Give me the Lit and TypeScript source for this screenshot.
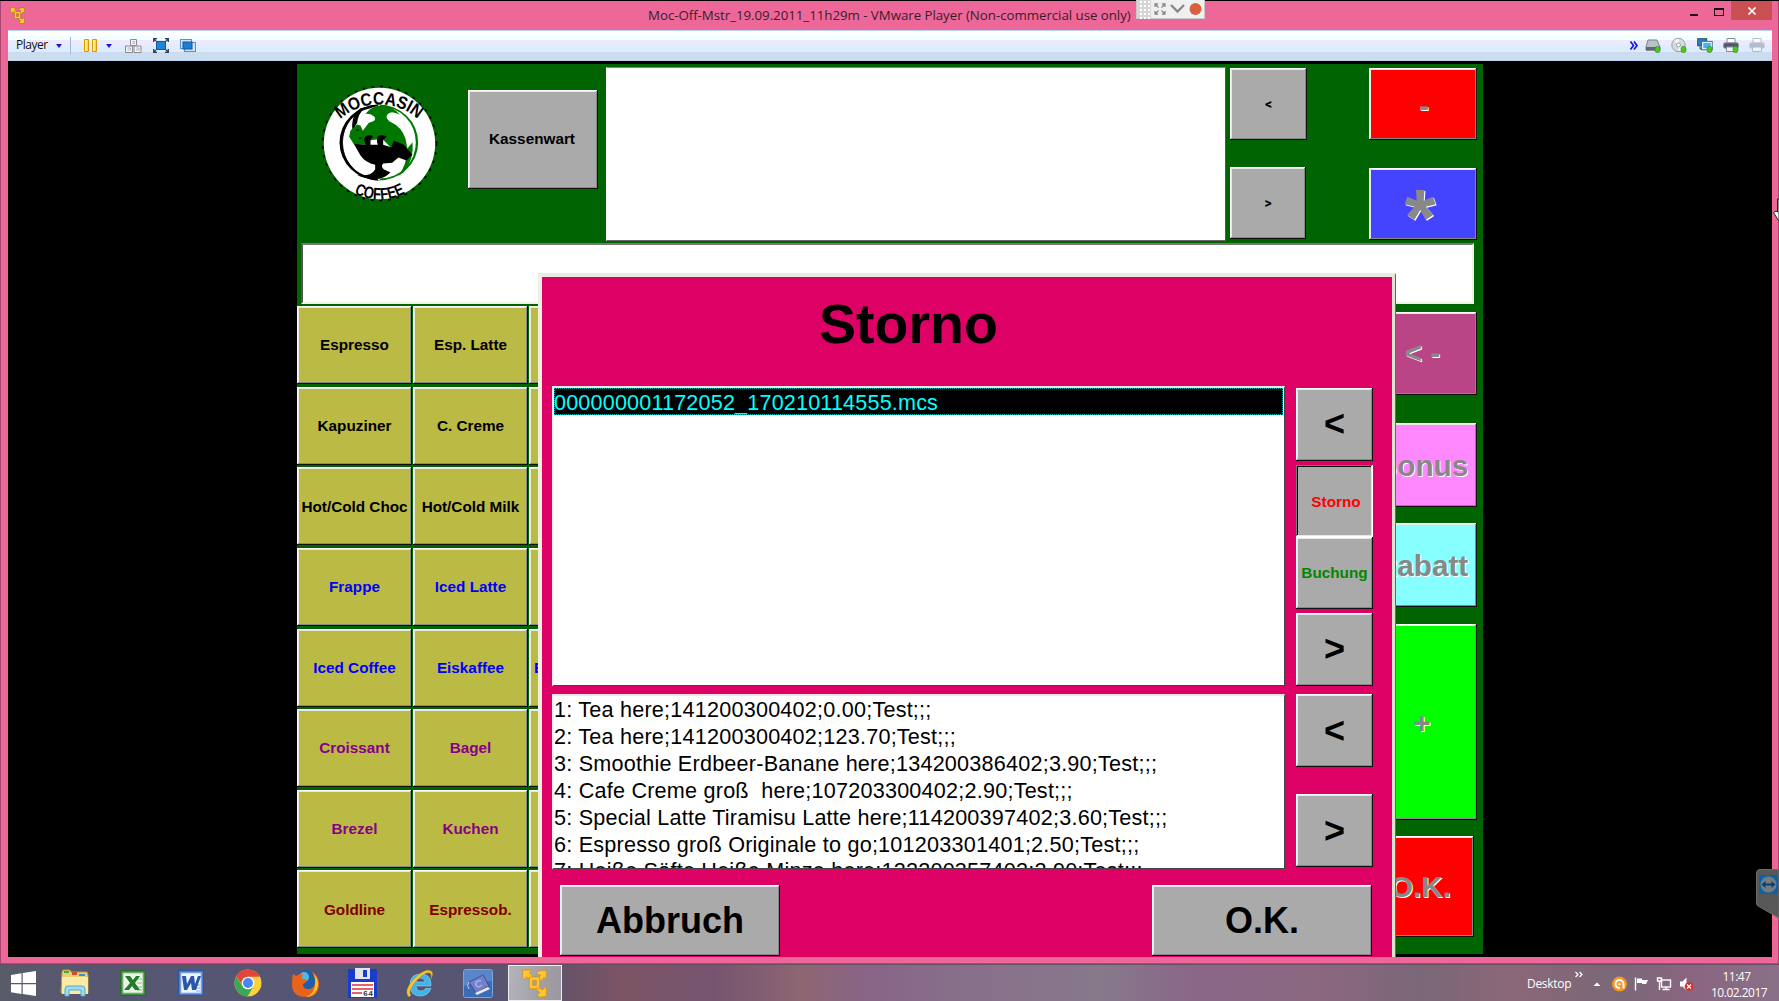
import { LitElement, html, css, svg } from "lit";
import { customElement } from "lit/decorators.js";

const products: { label: string; tone: string }[] = [
  { label: "Espresso", tone: "k" }, { label: "Esp. Latte", tone: "k" }, { label: "", tone: "k" },
  { label: "Kapuziner", tone: "k" }, { label: "C. Creme", tone: "k" }, { label: "", tone: "k" },
  { label: "Hot/Cold Choc", tone: "k" }, { label: "Hot/Cold Milk", tone: "k" }, { label: "", tone: "k" },
  { label: "Frappe", tone: "b" }, { label: "Iced Latte", tone: "b" }, { label: "", tone: "b" },
  { label: "Iced Coffee", tone: "b" }, { label: "Eiskaffee", tone: "b" }, { label: "E", tone: "b cut" },
  { label: "Croissant", tone: "p" }, { label: "Bagel", tone: "p" }, { label: "", tone: "p" },
  { label: "Brezel", tone: "p" }, { label: "Kuchen", tone: "p" }, { label: "", tone: "p" },
  { label: "Goldline", tone: "m" }, { label: "Espressob.", tone: "m" }, { label: "", tone: "m" },
];

const bookings = [
  "1: Tea here;141200300402;0.00;Test;;;",
  "2: Tea here;141200300402;123.70;Test;;;",
  "3: Smoothie Erdbeer-Banane here;134200386402;3.90;Test;;;",
  "4: Cafe Creme groß  here;107203300402;2.90;Test;;;",
  "5: Special Latte Tiramisu Latte here;114200397402;3.60;Test;;;",
  "6: Espresso groß Originale to go;101203301401;2.50;Test;;;",
  "7: Heiße Säfte Heiße Minze here;122200357402;2.90;Test;;;",
];

const vmGlyph = (fill: string, edge: string) => svg`
  <g fill=${fill} stroke=${edge} stroke-width="2">
    <path d="M1 3H28L21 11L31 22L22 32L12 23L8 33L1 27Z"/>
    <path d="M41 14L50 5H72V31L66 25L56 35L47 27L55 18Z"/>
    <path d="M40 60L48 51L60 63L72 52V82L52 85L44 79L53 71Z"/>
    <path fill-rule="evenodd" d="M21 24H52V59H21ZM31 34V49H42V34Z"/>
  </g>`;

const icons = {
  vmSmall: html`<svg width="15" height="17" viewBox="0 0 73 87">${vmGlyph("#ffd428", "#8a5410")}</svg>`,
  vmLarge: html`<svg width="25" height="29" viewBox="0 0 73 87">${vmGlyph("#ffc632", "#d08c0c")}</svg>`,
  pause: html`<svg width="13" height="13"><g stroke="#d99a00" fill="#ffd63c"><path d="M.5.5h4v12h-4zM8.500.5h4v12h-4z"/></g><path d="M1 1h1.500v11h-1.500zM9 1h1.500v11h-1.500z" fill="#fff3a8"/></svg>`,
  cad: html`<svg width="17" height="14" fill="#f4f4f6" stroke="#8a8a94"><path d="M5.500.5h6v6h-6zM.5 7h7v6.500h-7zM9 7h7v6.500h-7z"/><path d="M2.500 9h3v2h-3M11 9h3v2h-3M7.500 2.500h2v2h-2" fill="none" stroke="#b4b4bc"/></svg>`,
  full: html`<svg width="16" height="15"><rect x="3.500" y="3.500" width="9" height="8" fill="#1e86d8" stroke="#1459a0"/><path d="M.7 4V.7H4M12 .7h3.300V4M15.300 11v3.300H12M4 14.300H.7V11M1 1l2 2M15 1l-2 2M15 14l-2-2M1 14l2-2" fill="none" stroke="#2a3d5c" stroke-width="1.300"/></svg>`,
  unity: html`<svg width="16" height="13"><rect x=".5" y=".5" width="11" height="9" fill="#cfe2f7" stroke="#5d8fc8"/><rect x="4.500" y="3.500" width="11" height="9" fill="#cfe2f7" stroke="#5d8fc8"/><rect x="3" y="3" width="9" height="7" fill="#1e7fd0" stroke="#1459a0"/></svg>`,
  more: html`<svg width="8" height="9" fill="none" stroke="#1212f0" stroke-width="1.700"><path d="M.5.5l3 4-3 4M4 .5l3 4-3 4"/></svg>`,
  disk: html`<svg width="16" height="15"><path d="M3 2h9l3 7v3H1V9z" fill="#b9c2c9" stroke="#7a858e"/><path d="M1 9h14v3.500H1z" fill="#5d6870"/><rect x="10" y="8.500" width="5" height="6" rx="2" fill="#4fc51e" stroke="#2c8a10" stroke-width=".6"/></svg>`,
  cd: html`<svg width="16" height="15"><circle cx="7.500" cy="7" r="6.700" fill="#d6dade" stroke="#9aa2a8"/><path d="M7.500 7L3 2.500A6 6 0 0 1 8 1zM7.500 7l5 4A6 6 0 0 1 8 13z" fill="#f8f8fa"/><circle cx="7.500" cy="7" r="2" fill="#fff" stroke="#9aa2a8"/><rect x="10" y="8.500" width="5" height="6" rx="2" fill="#4fc51e" stroke="#2c8a10" stroke-width=".6"/></svg>`,
  lan: html`<svg width="16" height="15"><rect x=".7" y=".7" width="9" height="7" fill="#2f7fc0" stroke="#28506e"/><path d="M3 8v3h3" fill="none" stroke="#28506e"/><rect x="5.500" y="4" width="9" height="7" fill="#46b4f0" stroke="#fff" stroke-width="1.500"/><rect x="4.700" y="3.300" width="10.500" height="8.500" fill="none" stroke="#28506e" stroke-width=".8"/><rect x="10" y="8.500" width="5" height="6" rx="2" fill="#4fc51e" stroke="#2c8a10" stroke-width=".6"/></svg>`,
  print: html`<svg width="16" height="15"><path d="M4 .5h8V5H4z" fill="#fff" stroke="#8a8a9a"/><rect x=".8" y="5" width="14.400" height="5" rx="1" fill="#54546a" stroke="#77778c"/><path d="M3.500 9h9v4.500h-9z" fill="#f2f2f8" stroke="#8a8a9a"/><rect x="10" y="8.500" width="5" height="6" rx="2" fill="#4fc51e" stroke="#2c8a10" stroke-width=".6"/></svg>`,
  printOff: html`<svg width="16" height="15" opacity=".65"><path d="M4 .5h8V5H4z" fill="#fff" stroke="#9aa2ac"/><rect x=".8" y="5" width="14.400" height="5" rx="1" fill="#9ba4ae" stroke="#a8b0ba"/><path d="M3.500 9h9v4.500h-9z" fill="#f2f6fa" stroke="#9aa2ac"/></svg>`,
  start: html`<svg width="25" height="25" fill="#fff"><path d="M0 4l10.500-1.800v9.800H0zM11.700 2L25 0v12H11.700zM0 13.200h10.500V23L0 21.200zM11.700 13.200H25V25l-13.300-2z"/></svg>`,
  explorer: html`<svg width="30" height="28"><path d="M2 3l1-2h7l1 2h16l1 3v18H1z" fill="#e9cf75" stroke="#b8963c"/><path d="M4 2h5v2H4z" fill="#3cae3c"/><path d="M12 3h5v3h-5z" fill="#d84a32"/><path d="M19 5h6v2h-6z" fill="#3a90d0"/><path d="M2 8h26v17H2z" fill="#fbeaa4"/><path d="M5 27v-7q0-3 3-3h14q3 0 3 3v7h-4v-6H9v6z" fill="#9adcf6" stroke="#58a8d0"/></svg>`,
  excel: html`<svg width="26" height="26"><rect x=".5" y=".5" width="25" height="25" fill="#3d8a3d" stroke="#2c6a2c"/><rect x="3" y="3" width="20" height="20" fill="#e9f4e6" stroke="#9cc89c"/><path d="M17 9h5M17 13h5M17 17h5M17 20h5" stroke="#8cc08c"/><path d="M5 6h5l3 4 3-4h4l-5 7 5 7h-5l-3-4-3 4H4l6-7z" fill="#237a2b"/></svg>`,
  word: html`<svg width="26" height="26"><rect x=".5" y=".5" width="25" height="25" fill="#4a7cc8" stroke="#2c569c"/><rect x="3" y="3" width="20" height="20" fill="#eef4fc" stroke="#a8c4ec"/><path d="M18 15h4M18 18h4M18 21h4" stroke="#8caede"/><path d="M4 6h4l1 8 4-8h3l1 8 3-8h3l-5 14h-4l-1-7-4 7H6z" fill="#2a58a8"/></svg>`,
  chrome: html`<svg width="28" height="28" viewBox="-14 -14 28 28"><circle r="13.500" fill="#fbd13c"/><path d="M-11.700-6.750A13.500 13.500 0 0 0-.5 13.500L5.500 3.200-5.500 3.200z" fill="#3aa757"/><path d="M-11.700-6.750A13.500 13.500 0 0 1 11.900-6.300H0L-5 3z" fill="#e2453a"/><circle r="6.300" fill="#fff"/><circle r="5" fill="#4a86f0"/></svg>`,
  firefox: html`<svg width="28" height="29" viewBox="0 0 28 29"><circle cx="15" cy="13" r="12" fill="#1d5fa8"/><circle cx="13" cy="8" r="5" fill="#58b8e4"/><path d="M2 5q2 1 3 2 4-3 7-2-2 3 0 5 3 0 4 1-1 3-4 4 0 5 5 5 6 0 7-6 1-7-4-12 8 4 8 13 0 13-13 13Q1 28 1 15q0-6 1-10z" fill="#e8641c"/><path d="M22 4q6 6 5 13-2 10-12 11 8-3 9-12 1-6-2-12z" fill="#fbc02c"/></svg>`,
  floppy: html`<svg width="29" height="30"><path d="M0 1h28l1 2v27H0z" fill="#1a3ccc"/><rect x="7" y="0" width="15" height="11" fill="#e2e4ea"/><rect x="15" y="2" width="4" height="7" fill="#1a3ccc"/><rect x="3" y="14" width="23" height="15" fill="#fff"/><path d="M4 17h21M4 21h21M4 25h10" stroke="#e03030" stroke-width="1.400"/><text x="15" y="28" font-size="8" font-weight="700" font-family="Liberation Mono" fill="#333" textLength="10">64</text></svg>`,
  ie: html`<svg width="28" height="29" viewBox="0 0 28 29"><path fill-rule="evenodd" d="M25 17H10q.5 5 5 5 3 0 4.500-2.500H25Q22 27 14.500 27 4 27 4 16 4 5 15 5 25.500 5 25 17zM10 13h9q-.5-4-4.500-4T10 13z" fill="#3fb4ec" stroke="#8cd6f8" stroke-width=".6"/><path d="M3 28Q-3 22 8 10 19-1 25 2q3 2 0 8 1-5-1-6-5-2-14 8Q1 23 5 26z" fill="#f8c62c" stroke="#d09a10" stroke-width=".4"/></svg>`,
  book: html`<svg width="30" height="29"><rect x=".5" y=".5" width="29" height="28" rx="2" fill="#3a6cb8" stroke="#7aa4dc"/><path d="M1 1h28v11Q15 12 1 17z" fill="#6c98d4" opacity=".6"/><path d="M6 13l14-7 6 11-13 7z" fill="#7480c8" stroke="#424e96"/><path d="M12 24l13-6 2 2-13 6z" fill="#e8e8f0"/><path d="M6 13q-3 3 0 7" stroke="#c2ccf4" fill="none"/><path d="M18 12q-4-1-5 2t3 4l3-2" fill="none" stroke="#a4b0ec" stroke-width="1.500"/></svg>`,
};

@customElement("app-root")
export class AppRoot extends LitElement {
  static styles = css`
    :host { display: block; width: 1779px; height: 1001px; overflow: hidden; position: relative; background: #000;
      font-family: "Liberation Sans", Arial, sans-serif; }
    * { box-sizing: border-box; }
    svg { display: block; flex: none; overflow: visible; }
    .window { height: 964px; padding: 0 7px 7px 8px; background: #ee6799; border-top: 1px solid #000; box-shadow: inset 1px 0 #a8486c, inset -1px 0 #a8486c, inset 0 -1px #b2496f;
      display: flex; flex-direction: column; }
    .title { height: 29px; display: flex; align-items: flex-start; position: relative; flex: none; }
    .title .appicon { margin: 6px 0 0 2px; }
    .title .text { margin: 4px 0 0 623px; font: 13.300px/20px "Open Sans", "Noto Sans", sans-serif; color: #3a1c2c; white-space: nowrap; width: 484px; letter-spacing: -.04px; }
    .controls { margin-left: auto; display: flex; align-items: flex-start; }
    .min { width: 8px; height: 2px; background: #1c1014; margin: 13px 16px 0 0; }
    .max { width: 10px; height: 8px; border: 1px solid #1c1014; border-top-width: 2px; margin: 7px 7px 0 0; }
    .close { width: 41px; height: 19px; background: #ca5153; display: flex; align-items: center; justify-content: center; }
    .widget { position: absolute; left: 1128px; top: -1px; width: 69px; height: 19px; background: #f0f0f0; border: 1px solid #c8c8c8; border-top: 0; display: flex; align-items: center; }
    .tools { height: 31px; flex: none; display: flex; align-items: center; padding: 0 7px 0 8px; border: 1px solid #b9d2f2; border-width: 1px 0;
      background: linear-gradient(#fff 0 5px, #f0ffff 5px 9px, #edebfb 9px 14px, #dcedff 14px 21px, #ccd9f2 21px 22px, #ccdded 22px); }
    .tools .name { font: 12px/16px "Open Sans", sans-serif; color: #111; letter-spacing: -.5px; width: 40px; margin-top: -2px; }
    .tri { width: 0; height: 0; border: 3.500px solid transparent; border-top: 4px solid #1a1ad6; border-bottom: 0; }
    .sep { width: 1px; height: 17px; background: #9db8d8; margin: 0 13px 0 8px; }
    .right { margin-left: auto; display: flex; align-items: center; gap: 10px; }
    .right svg:first-child { margin-right: -3px; }
    .screen { flex: 1; background: #000; display: flex; padding: 3px 0 0 289px; position: relative; overflow: hidden; }
    .pos { width: 1185.500px; height: 890px; background: #006500; display: flex; flex-direction: column; flex: none; }
    .head { height: 179px; display: flex; align-items: flex-start; flex: none; }
    .logo { margin: 22px 0 0 24.500px; }
    .btn { background: #aaa; font-weight: 700; font-size: 15.300px; display: flex; align-items: center; justify-content: center; white-space: nowrap; color: #000; overflow: hidden;
      box-shadow: inset -1px -1px #111, inset 1px 1px #fff, inset -2px -2px #888, inset 2px 2px #e8e8e8; }
    .user { margin: 26px 0 0 31.500px; width: 130px; height: 99px; padding: 0 2px 1px 0; }
    .display { margin: 3px 0 0 8px; width: 620px; height: 174px; background: #fff; border: 1px solid #fff; border-top-color: #5aa25a; border-right: 1px solid #555; border-bottom: 1px solid #666; flex: none; }
    .nav { margin: 4px 0 0 4px; display: flex; flex-direction: column; gap: 27px; width: 77px; }
    .nav .btn { height: 72px; font: 700 14px Roboto, sans-serif; }
    .nav .btn:last-child { width: 76px; }
    .ops { margin: 4px 0 0 62px; display: flex; flex-direction: column; gap: 28px; width: 108px; }
    .ops .btn { height: 72px; }
    .ops .minus { padding-left: 2px; padding-top: 3px; }
    .off { font-size: 29.700px; color: #888; text-shadow: 1px 1px #fff; }
    .ops .star { font-size: 80px; line-height: 72px; }
    .star span { padding-top: 28px; margin-right: 6px; }
    .entry { margin-left: 4px; width: 1173px; height: 61px; background: #fff; border: 2px solid #777; border-color: #777 #f2f2e0 #f2f2e0 #555; flex: none; }
    .body { flex: 1; display: flex; align-items: flex-start; }
    .grid { margin: 2px 0 0; display: grid; grid-template-columns: 115px 115px 115px; grid-auto-rows: 78px; gap: 2.650px 1px; }
    .grid .btn { background: #bbba44; padding-top: .5px; }
    .k { color: #000; } .b { color: #00f; } .p { color: #880088; } .m { color: #800000; }
    .grid .cut { justify-content: flex-start; padding-left: 5px; }
    .keys { margin: 8px 6px 0 auto; width: 109px; display: flex; flex-direction: column; }
    .back { background: #b94587; height: 83px; padding: 0 0 2px 1px; }
    .bonus { background: #ff88ff; height: 84px; margin-top: 28px; padding-top: 1px; }
    .rabatt { background: #88ffff; height: 84px; margin-top: 16px; padding-top: 2px; }
    .plus { background: #0f0; height: 196px; margin-top: 17px; padding-top: 1px; }
    .ok { background: #f00; height: 101px; margin: 16px 3px 0 0; } .minus { background: #f00; } .times { background: #4444ff; }
    .dialog { position: absolute; left: 530px; top: 212px; width: 858px; height: 690px; background: #dd0065; border: 4px solid; border-color: #e8ece0 #e2e4d2 #000 #eef0e4;
      padding: 0 18px 0 10px; display: grid; grid-template-columns: 733px 77px; column-gap: 11px; grid-template-rows: 109px 308px 175px auto; }
    .dialog::after { content: ""; position: absolute; right: -4px; top: -3px; bottom: -4px; width: 1px; background: #666; }
    .caption { grid-column: 1 / -1; font-size: 55.500px; font-weight: 700; line-height: 64px; padding: 15px 0 0 267px; margin: 0; }
    .list { background: #fff; border: 2px solid #fff; border-color: #f0e4e4 #444 #444 #f0f0f0; border-right-width: 1px; border-bottom-width: 1px; font-size: 21.600px; line-height: 26.900px; overflow: hidden; white-space: pre; }
    .files { height: 300px; } .lines { height: 175px; padding-top: 1px; letter-spacing: .22px; }
    .selected { background: #000; color: #0ff; height: 27px; border: 1px dotted #00b4b4; line-height: 27px; margin-right: 1px; letter-spacing: .17px; text-indent: -1px; }
    .side { display: flex; flex-direction: column; }
    .side .btn { height: 73px; flex: none; }
    .side .big { font-size: 36px; }
    .side.top { padding-top: 2px; } .side.top .btn { height: 72.500px; }
    .side.top .pressed { margin-top: 4px; color: #f00; padding: 2px 0 0 3px; box-shadow: inset -1px -1px #fff, inset 1px 1px #777, inset -2px -2px #e8e8e8, inset 2px 2px #000; }
    .side.top .buch { color: #008800; margin: -.5px 0 4px; padding-top: 1px; }
    .side.bottom { justify-content: space-between; height: 173px; }
    .foot { grid-column: 1 / -1; display: flex; justify-content: space-between; padding: 16px 1px 0 8px; }
    .foot .btn { width: 220px; height: 71px; font-size: 36px; }
    .viewer { position: absolute; left: 1756px; top: 869px; }
    .cursor { position: absolute; left: 1773px; top: 199px; }
    .taskbar { height: 37px; display: flex; align-items: center; color: #fff; padding: 0 17px 0 11px; border-top: 1px solid #6c4a62;
      background: linear-gradient(90deg, #585b68 0, #575672 5%, #555574 22%, #585570 28%, #65536a 31.500%, #7c5464 35%, #765470 40%, #8d6672 45%, #886488 49%, #87708a 54%, #87788a 62%, #8a6788 67%, #8b6780 74%, #7a6878 80%, #8b6777 85%, #7a6878 91%, #8a6580 95%, #8a7088 100%); }
    .ic { display: flex; flex: none; }
    .active { width: 54px; height: 36px; margin-left: -11px; border: 1px solid #eee; background: linear-gradient(100deg, #b4b4be, #a29fa6 60%, #9a98a0); display: flex; align-items: center; justify-content: center; padding-right: 1px; flex: none; }
    .tray { margin-left: auto; display: flex; align-items: center; font: 12px/16px "Open Sans", sans-serif; letter-spacing: -.5px; padding-top: 1px; }
    .clock { text-align: center; width: 51px; margin-left: 10px; line-height: 15.500px; padding-top: 2px; }
    .desk { width: 43px; letter-spacing: -.3px; }
    .chev { margin-left: 1px; }
    .status { margin-left: 11px; }
    .gap { width: 11px; }
    .after-pause { margin: 0 13px 0 9px; }
  `;

  render() {
    return html`
      <div class="window">
        <div class="title">
          <div class="appicon">${icons.vmSmall}</div>
          <div class="text">Moc-Off-Mstr_19.09.2011_11h29m - VMware Player (Non-commercial use only)</div>
          <div class="controls">
            <div class="min"></div><div class="max"></div>
            <div class="close"><svg width="8" height="8" stroke="#fff" stroke-width="1.700"><path d="M.5.5l7 7M7.500.5l-7 7"/></svg></div>
          </div>
          <div class="widget">
            <svg width="68" height="18">
              <rect width="14" height="18" fill="#d6d6d6"/>
              <path d="M4 1v18M8 1v18M12 1v18" stroke="#fff" stroke-width="2" stroke-dasharray="2 2"/>
              <g fill="none" stroke="#888" stroke-width="1.300">
                <path d="M18 7V4h3M25 4h3v3M28 11v3h-3M21 14h-3v-3M18.500 4.500l3 3M27.500 4.500l-3 3M27.500 13.500l-3-3M18.500 13.500l3-3"/>
                <path d="M34 5l6.500 6.500L47 5" stroke-width="2.400"/>
              </g>
              <circle cx="58.500" cy="9" r="6" fill="#d8603f"/>
            </svg>
          </div>
        </div>
        <div class="tools">
          <span class="name">Player</span><i class="tri"></i><i class="sep"></i>
          ${icons.pause}<i class="tri after-pause"></i>
          ${icons.cad}<span class="gap"></span>${icons.full}<span class="gap"></span>${icons.unity}
          <div class="right">${icons.more}${icons.disk}${icons.cd}${icons.lan}${icons.print}${icons.printOff}</div>
        </div>
        <div class="screen">
          <div class="pos">
            <div class="head">
              ${this.logo()}
              <div class="btn user">Kassenwart</div>
              <div class="display"></div>
              <div class="nav"><div class="btn">&lt;</div><div class="btn">&gt;</div></div>
              <div class="ops"><div class="btn off minus">-</div><div class="btn off times star"><span>*</span></div></div>
            </div>
            <div class="entry"></div>
            <div class="body">
              <div class="grid">${products.map((p) => html`<div class="btn ${p.tone}">${p.label}</div>`)}</div>
              <div class="keys">
                <div class="btn off back">&lt; -</div>
                <div class="btn off bonus">Bonus</div>
                <div class="btn off rabatt">Rabatt</div>
                <div class="btn off plus">+</div>
                <div class="btn off ok">O.K.</div>
              </div>
            </div>
          </div>
          <div class="dialog">
            <h1 class="caption">Storno</h1>
            <div class="list files"><div class="selected">000000001172052_170210114555.mcs</div></div>
            <div class="side top">
              <div class="btn big">&lt;</div>
              <div class="btn pressed">Storno</div>
              <div class="btn buch">Buchung</div>
              <div class="btn big">&gt;</div>
            </div>
            <div class="list lines">${bookings.map((b) => html`<div>${b}</div>`)}</div>
            <div class="side bottom"><div class="btn big">&lt;</div><div class="btn big">&gt;</div></div>
            <div class="foot"><div class="btn">Abbruch</div><div class="btn">O.K.</div></div>
          </div>
        </div>
      </div>
      <div class="taskbar">
        ${[icons.start, icons.explorer, icons.excel, icons.word, icons.chrome, icons.firefox, icons.floppy, icons.ie, icons.book].map(
          (i, n) => html`<span class="ic" style="width:${[49, 60, 57.5, 56.5, 57, 56.5, 58, 57, 56.5][n]}px">${i}</span>`
        )}
        <div class="active">${icons.vmLarge}</div>
        <div class="tray">
          <span class="desk">Desktop</span>
          <svg class="chev" width="9" height="30" fill="none" stroke="#fff" stroke-width="1.200"><path d="M4.500 3l2.500 2.500L4.500 8M8.500 3L11 5.500 8.500 8"/></svg>
          <svg class="status" width="110" height="18">
            <path d="M2.500 11l3.500-3.500 3.500 3.500z" fill="#fff"/>
            <circle cx="28.500" cy="9" r="7.500" fill="#f7941d"/>
            <path d="M32.500 13.500V9a4 4 0 1 0-3.500 4" fill="none" stroke="#fff" stroke-width="2"/><circle cx="28.500" cy="9" r="1.200" fill="#fff"/>
            <path d="M44.500 2.500v13" stroke="#fff" stroke-width="1.400"/><path d="M46 3.500h5v1.500h6l-2 4h-4v-1h-5z" fill="#fff"/>
            <g fill="none" stroke="#fff" stroke-width="1.400"><rect x="70.500" y="5" width="9" height="7"/><path d="M75 12v2.500M71.500 14.500h7M66.500 3h4v3h-4zM68.500 6v9"/></g>
            <path d="M89 6.500h2.500l4-4v13l-4-4H89z" fill="#fff"/><circle cx="98" cy="11.500" r="4.300" fill="#e02a2a"/><path d="M96 9.500l4 4M100 9.500l-4 4" stroke="#fff" stroke-width="1.300"/>
          </svg>
          <div class="clock"><div>11:47</div><div>10.02.2017</div></div>
        </div>
      </div>
      <svg class="viewer" width="23" height="49"><path d="M4 .5h19V49L2 37Q.5 36 .5 34V4Q.5.5 4 .5z" fill="#585858" stroke="#6c6c6c"/><rect x="3" y="6" width="19" height="19" fill="#0b62a4"/><circle cx="12.500" cy="15.500" r="8" fill="#777b80"/><path d="M5.500 15.500l4-3.500v2.500h6V12l4 3.500-4 3.500v-2.500h-6V19z" fill="#0b3f70"/></svg>
      <svg class="cursor" width="6" height="22"><path d="M4.500 0v13L3 12 .5 13.500 4.500 20 6 22V0z" fill="#fff" stroke="#222"/></svg>
    `;
  }

  private logo() {
    return html`<svg class="logo" width="115" height="115" viewBox="34.500 31.500 345 345">
      <circle cx="207" cy="204" r="171" fill="none" stroke="#000" stroke-width="5" stroke-dasharray="8 18"/>
      <circle cx="207" cy="204" r="167" fill="#fff"/>
      <path d="M205 87A110 114 0 0 0 205 315L180 304A96 104 0 0 1 180 98z" fill="#000"/>
      <path d="M205 87A118 114 0 0 0 205 315L200 309A104 108 0 0 1 200 93z" fill="#000"/>
      <path d="M150 98Q120 120 126 165L140 142Q142 115 165 95z" fill="#000"/>
      <path d="M205 87A118 114 0 0 1 205 315L212 308A104 107 0 0 0 212 94z" fill="#007800"/>
      <path d="M290 220Q290 270 262 302L280 290Q312 250 306 200z" fill="#007800"/>
      <path d="M165 115Q185 88 218 90Q250 94 268 118Q240 102 230 118Q224 128 238 138L185 140Q200 130 190 122Q180 114 165 115z" fill="#007800"/>
      <path d="M116 184L120 165L140 147L150 150L157 166L175 142Q202 130 238 138Q275 155 285 190L292 225L262 204L240 215L215 190L175 195L165 208L130 206z" fill="#007800"/>
      <path d="M130 205L165 208Q155 185 170 180Q180 176 188 182L180 192V208H202Q195 188 205 180Q218 176 228 184L218 194V208L242 215L250 196L278 206L306 238L288 255L264 246L245 262L218 264Q205 280 240 290Q215 318 175 308Q150 306 140 298Q180 305 194 282V268Q165 262 150 240z" fill="#000"/>
      <path d="M138 164h7M146 188h7M275 225l10 8-10 10z" stroke="#000" stroke-width="4"/>
      <defs><path id="up" d="M82 138A176 176 0 0 1 330 138"/><path id="low" d="M115 344A165 165 0 0 0 299 344"/></defs>
      <g font-family="Liberation Sans" font-weight="700" fill="#000">
        <text font-size="53"><textPath href="#up" startOffset="10" textLength="254" lengthAdjust="spacingAndGlyphs">MOCCASIN</textPath></text>
        <text font-size="50"><textPath href="#low" startOffset="18" textLength="160" lengthAdjust="spacingAndGlyphs">COFFEE</textPath></text>
      </g>
    </svg>`;
  }
}
